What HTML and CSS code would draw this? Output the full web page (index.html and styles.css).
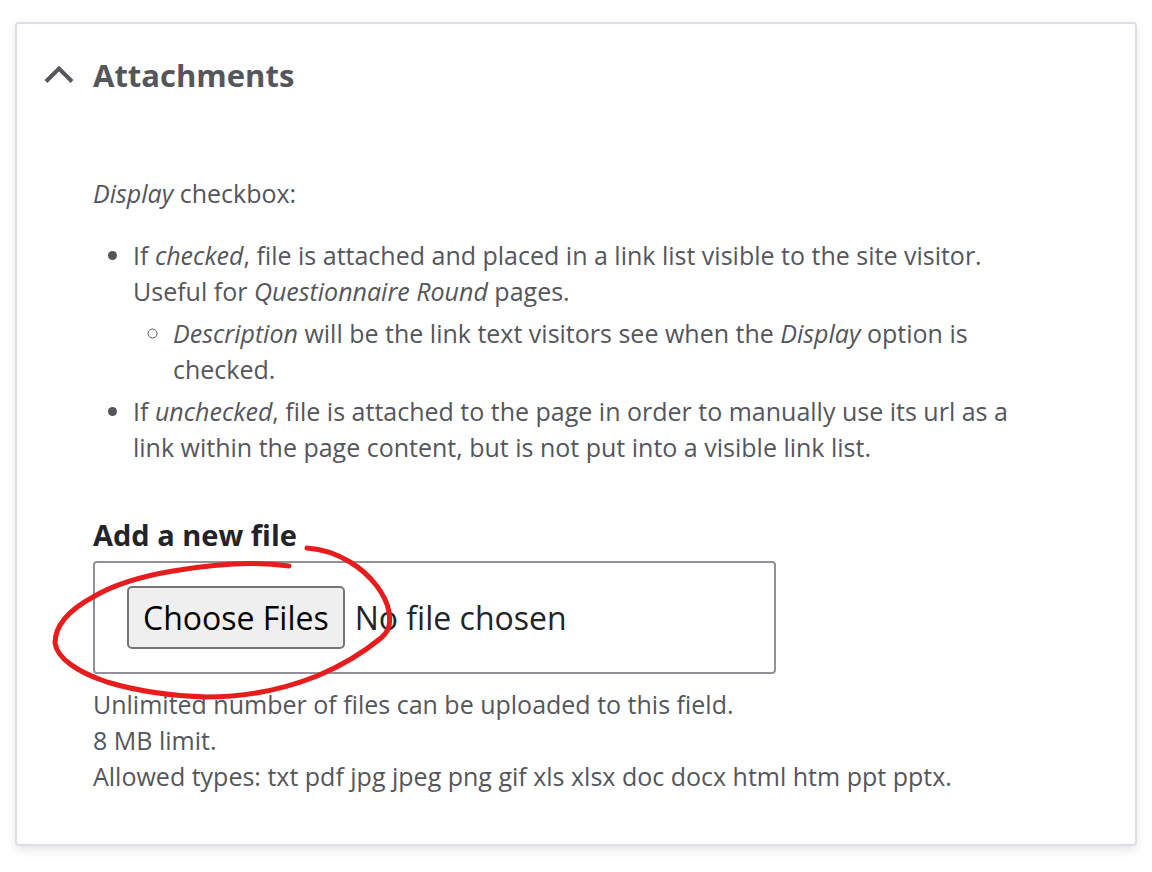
FILE: index.html
```
<!doctype html>
<html lang="en">
<head>
<title>Attachments</title>
<meta charset="utf-8">
<meta name="viewport" content="width=device-width, initial-scale=1">
<link rel="stylesheet" href="styles.css">
</head>
<body>
	<details class="card" open>
		<summary class="card-title">
			<svg class="chevron" width="30" height="20" viewBox="0 0 30 20" aria-hidden="true"><path d="M2 16.5 15 3.5 28 16.5" fill="none" stroke="#55565b" stroke-width="4"/></svg>
			<span>Attachments</span>
		</summary>
		<div class="card-body">
			<p class="intro"><em>Display</em> checkbox:</p>
			<ul class="help">
				<li>If <em>checked</em>, file is attached and placed in a link list visible to the site visitor. Useful for <em>Questionnaire Round</em> pages.
					<ul>
						<li><em>Description</em> will be the link text visitors see when the <em>Display</em> option is checked.</li>
					</ul>
				</li>
				<li>If <em>unchecked</em>, file is attached to the page in order to manually use its url as a link within the page content, but is not put into a visible link list.</li>
			</ul>
			<label class="file-label" for="upload">Add a new file</label>
			<div class="file-wrap">
				<input class="file-input" type="file" id="upload" multiple>
				<svg class="circle" width="342" height="160" viewBox="50 540 342 160" aria-hidden="true"><path d="M307 548C322 549 337 554 350 562C370 574 386 594 389 612C391 626 388 632 381 638C364 652 341 666 317 676C282 690 247 697 207 697C172 696 137 691 107 682C77 672 57 658 55 643C55 625 69 610 93 597C113 585 143 576 173 571C213 564 255 561 289 566" fill="none" stroke="#e71c1c" stroke-width="5" stroke-linecap="round" stroke-linejoin="round"/></svg>
			</div>
			<div class="file-help">
				Unlimited number of files can be uploaded to this field.<br>
				8 MB limit.<br>
				Allowed types: txt pdf jpg jpeg png gif xls xlsx doc docx html htm ppt pptx.
			</div>
		</div>
	</details>
</body>
</html>
```

FILE: styles.css
```
body {
	margin: 0;
	padding: 22px 15px;
	background: #fff;
	color: #55565b;
	font: 25px/36px "Segoe UI", "Open Sans", "Noto Sans", sans-serif;
}
.card {
	border: 2px solid #dedfe4;
	border-radius: 4px;
	background: #fff;
	box-shadow: 0 4px 10px rgba(0,0,0,.1);
}
.card-title {
	display: flex;
	align-items: center;
	gap: 19px;
	padding: 31px 27px 32px;
	font-size: 31px;
	line-height: 40px;
	font-weight: bold;
	list-style: none;
	cursor: pointer;
}
.card-title::-webkit-details-marker {
	display: none;
}
.card-body {
	padding: 48px 84px 50px 76px;
}
.intro {
	margin: 0 0 26px;
}
.help {
	margin: 0 0 52px;
	padding-left: 40px;
}
.help ul {
	margin: 6px 0;
	padding-left: 40px;
}
.file-label {
	display: block;
	margin-bottom: 8px;
	color: #232429;
	font-size: 29px;
	font-weight: bold;
}
.file-wrap {
	position: relative;
	width: 683px;
	max-width: 100%;
}
.file-input {
	display: block;
	box-sizing: border-box;
	width: 100%;
	padding: 23px 32px;
	border: 2px solid #919297;
	border-radius: 4px;
	background: #fff;
	color: #232429;
	font: inherit;
	font-size: 32px;
}
.file-input::file-selector-button {
	margin: 0 10px 0 0;
	padding: 12px 14px 11px;
	border: 2px solid #767676;
	border-radius: 5px;
	background: #efefef;
	color: #000;
	font: inherit;
}
/* hand-drawn ring round the button */
.circle {
	position: absolute;
	left: -43px;
	top: -21px;
	pointer-events: none;
}
.file-help {
	margin-top: 12px;
}
```
